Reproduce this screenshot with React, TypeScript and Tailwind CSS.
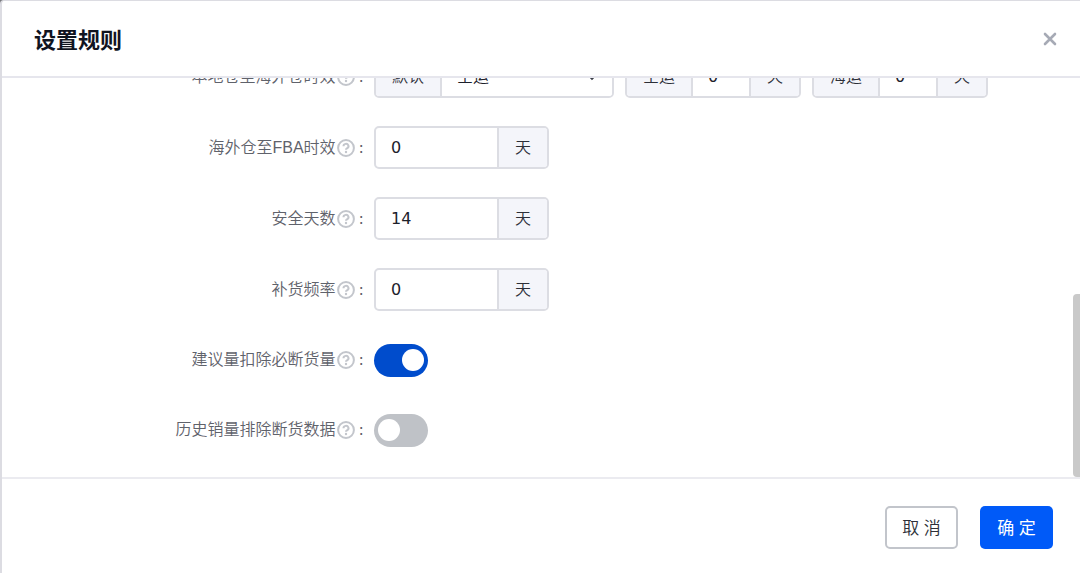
import { useState } from "react";
import type { ReactNode } from "react";

const box = "flex h-[43px] overflow-hidden rounded-[5px] border-2 border-[#dcdde3] bg-white";
const addon = "flex shrink-0 items-center bg-[#f4f5fa] px-4 text-[#2c2f38]";
const field = "min-w-0 px-[15px] text-[#1d212b] outline-none";

function HelpIcon() {
  return (
    <svg className="size-[18px] shrink-0" viewBox="0 0 18 18" fill="none" stroke="#c3c6cc" aria-hidden="true">
      <circle cx="9" cy="9" r="7.9" strokeWidth="2" />
      <path d="M6.5 7.2a2.5 2.3 0 1 1 3.8 1.9c-.9.5-1.3.8-1.3 1.6" strokeWidth="2" />
      <circle cx="9" cy="13" r="1.2" fill="#c3c6cc" stroke="none" />
    </svg>
  );
}

function Row({ id, label, short, children }: { id: string; label: string; short?: boolean; children: ReactNode }) {
  return (
    <div className={`flex shrink-0 items-center gap-2.5 ${short ? "h-[42px]" : "h-[43px]"}`}>
      <label htmlFor={id} className="flex w-[362px] shrink-0 items-center justify-end whitespace-nowrap text-[#5f626b]">
        {label}
        <span className="ml-px flex items-center gap-1">
          <HelpIcon />
          <span className="font-['DejaVu_Sans',sans-serif] font-normal">:</span>
        </span>
      </label>
      {children}
    </div>
  );
}

function DaysInput({ id, value }: { id: string; value: string }) {
  return (
    <div className={`${box} w-[175px]`}>
      <input id={id} defaultValue={value} className={`${field} flex-1 font-['DejaVu_Sans',sans-serif] font-normal`} />
      <span className={`${addon} border-l-2 border-[#dcdde3]`}>天</span>
    </div>
  );
}

function TransportInput({ name }: { name: string }) {
  return (
    <label className={`${box} w-[176px]`}>
      <span className={`${addon} border-r-2 border-[#dcdde3]`}>{name}</span>
      <input defaultValue="0" className={`${field} flex-1 font-['DejaVu_Sans',sans-serif] font-normal`} />
      <span className={`${addon} border-l-2 border-[#dcdde3]`}>天</span>
    </label>
  );
}

function Toggle({ id, initial }: { id: string; initial: boolean }) {
  const [on, setOn] = useState(initial);
  return (
    <button
      id={id}
      type="button"
      role="switch"
      aria-checked={on}
      onClick={() => setOn(!on)}
      className={`flex h-[33px] w-[54px] items-center rounded-full px-1 ${on ? "justify-end bg-[#004ccc]" : "justify-start bg-[#bfc2c7]"}`}
    >
      <span className="size-[22px] rounded-full bg-white" />
    </button>
  );
}

export default function App() {
  return (
    <div className="h-screen bg-[#77787c]">
      <section className="flex h-full flex-col overflow-hidden rounded-tl-[4px] border-t border-l-2 border-[#dcdce2] bg-white font-['Liberation_Sans','Noto_Sans_CJK_SC',sans-serif] text-base font-[350]">
        <header className="flex h-[77px] shrink-0 items-center justify-between border-b-2 border-[#e6e6ed] pr-[22px] pl-8">
          <h1 className="font-['Noto_Sans_CJK_SC',sans-serif] text-[22px] font-bold text-[#10141f]">设置规则</h1>
          <button type="button" aria-label="关闭" className="flex size-4 items-center justify-center">
            <svg className="size-4" viewBox="0 0 16 16" fill="none" stroke="#a6aab5" strokeWidth="2.6" strokeLinecap="round">
              <path d="M3 3l10 10M13 3L3 13" />
            </svg>
          </button>
        </header>

        <main className="relative flex min-h-0 flex-1 flex-col justify-end gap-7 overflow-hidden pb-[26px]">
          <Row id="local" label="本地仓至海外仓时效">
            <div className="flex gap-[11px]">
              <div className={`${box} w-[240px]`}>
                <span className={`${addon} border-r-2 border-[#dcdde3]`}>默认</span>
                <div className="relative flex flex-1">
                  <select id="local" defaultValue="空运" className={`${field} flex-1 appearance-none bg-white`}>
                    <option>空运</option>
                    <option>海运</option>
                  </select>
                  <svg className="pointer-events-none absolute top-1/2 right-3.5 size-3 -translate-y-1/2" viewBox="0 0 12 12" fill="none" stroke="#3c404a" strokeWidth="1.6">
                    <path d="M1.5 3.5L6 8l4.5-4.5" />
                  </svg>
                </div>
              </div>
              <TransportInput name="空运" />
              <TransportInput name="海运" />
            </div>
          </Row>
          <Row id="fba" label="海外仓至FBA时效">
            <DaysInput id="fba" value="0" />
          </Row>
          <Row id="safe" label="安全天数">
            <DaysInput id="safe" value="14" />
          </Row>
          <Row id="frequency" label="补货频率">
            <DaysInput id="frequency" value="0" />
          </Row>
          <Row id="deduct" label="建议量扣除必断货量" short>
            <Toggle id="deduct" initial />
          </Row>
          <Row id="exclude" label="历史销量排除断货数据" short>
            <Toggle id="exclude" initial={false} />
          </Row>
          <div className="absolute right-0 bottom-0 h-[183px] w-[7px] rounded-l-[4px] bg-[#c9c9c9]" />
        </main>

        <footer className="flex h-24 shrink-0 justify-end gap-[22px] border-t-2 border-[#ebebf0] pt-[27px] pr-[27px]">
          <button type="button" className="h-[43px] w-[73px] rounded-[5px] border-2 border-[#c2c5cb] bg-white pt-0.5 text-[17px] text-[#2c2f38]">
            取 消
          </button>
          <button type="button" className="h-[43px] w-[73px] rounded-[5px] bg-[#005af8] pt-0.5 text-[17px] font-normal text-white">
            确 定
          </button>
        </footer>
      </section>
    </div>
  );
}
